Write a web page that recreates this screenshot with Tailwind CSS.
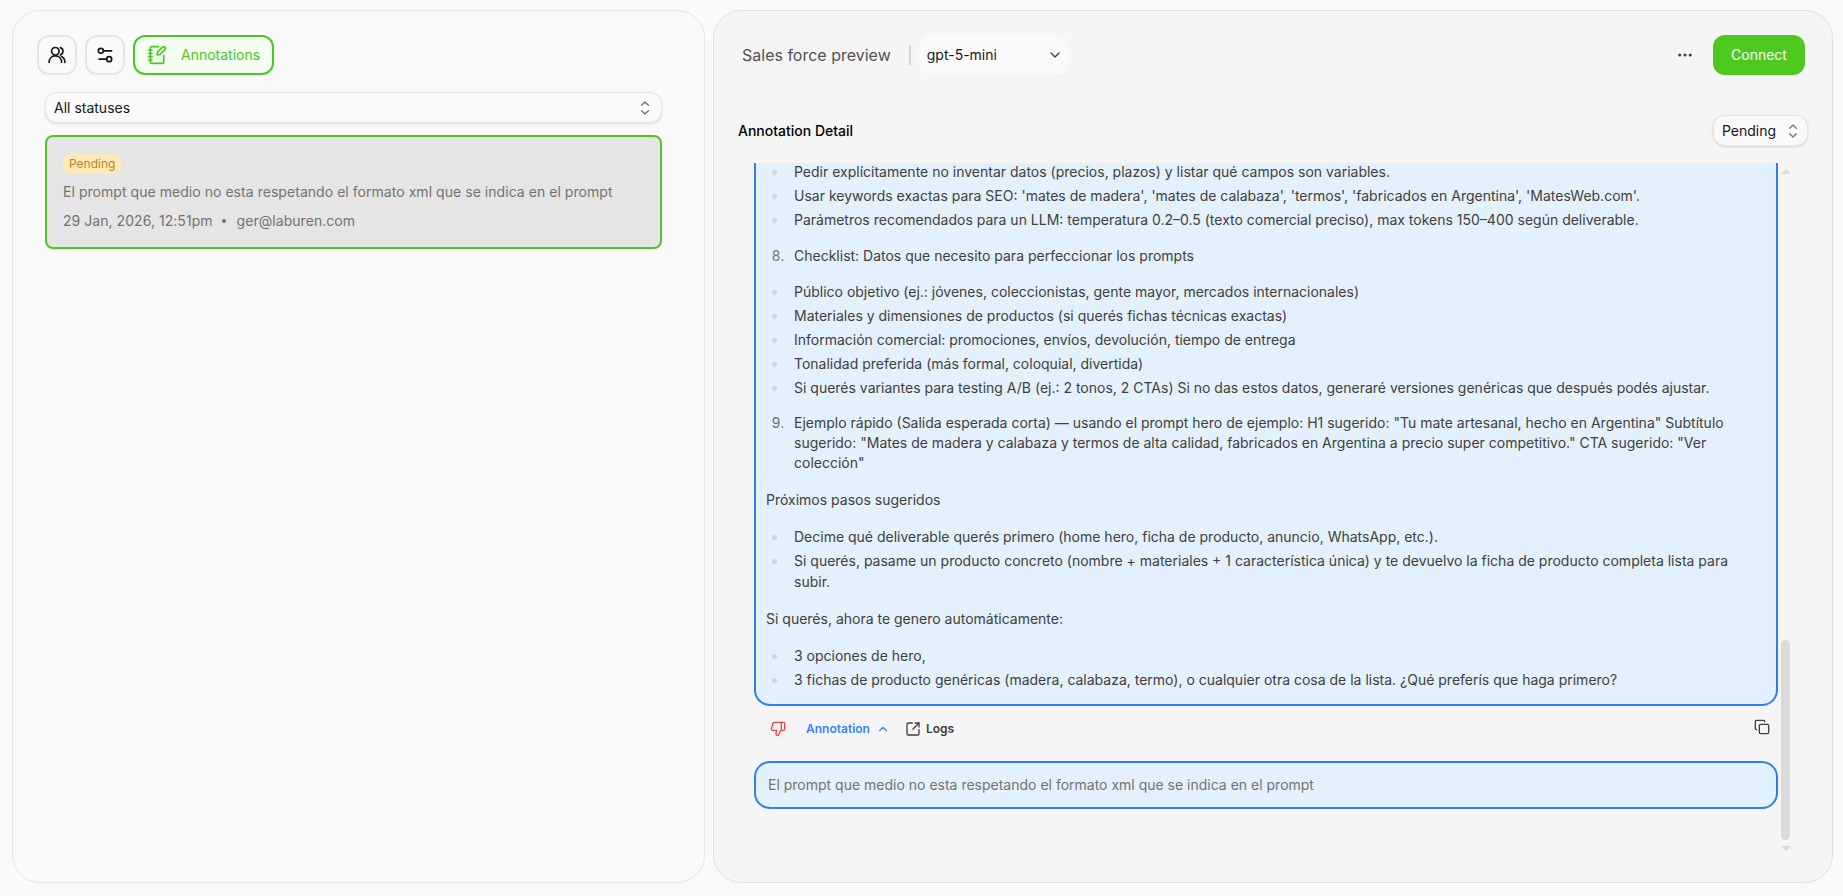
<!DOCTYPE html>
<html lang="en">
<head>
  <meta charset="UTF-8" />
  <title>Annotations</title>
  <script src="https://cdn.jsdelivr.net/npm/@tailwindcss/browser@4"></script>
</head>
<body class="h-screen overflow-hidden bg-[#fafafa] font-['Inter',sans-serif] text-sm text-[#171717] flex gap-2 pl-3 pr-[10px] pt-[10px] pb-[13px]">

  <!-- left panel -->
  <aside class="w-[693px] shrink-0 rounded-[28px] border border-[#e5e5e5] bg-[#fafafa] pl-[24px] pr-[42px] pt-[24px]">
    <div class="flex gap-2">
      <button class="w-10 h-10 flex items-center justify-center rounded-xl border-2 border-[#e5e5e5]">
        <svg class="w-5 h-5" viewBox="0 0 24 24" fill="none" stroke="currentColor" stroke-width="2" stroke-linecap="round" stroke-linejoin="round"><circle cx="10" cy="7.500" r="4.500"/><path d="M2.500 21c0-4.500 3-8 7.500-8s7.500 3.500 7.500 8"/><path d="M16 3.200a4.500 4.500 0 0 1 0 8.600"/><path d="M21.500 21c0-3.500-1.500-6-4-7.300"/></svg>
      </button>
      <button class="w-10 h-10 flex items-center justify-center rounded-xl border-2 border-[#e5e5e5]">
        <svg class="w-5 h-5" viewBox="0 0 24 24" fill="none" stroke="currentColor" stroke-width="2" stroke-linecap="round" stroke-linejoin="round"><path d="M20 7h-9"/><path d="M14 17H5"/><circle cx="17" cy="17" r="3"/><circle cx="7" cy="7" r="3"/></svg>
      </button>
      <button class="h-10 w-[141px] flex items-center gap-[14px] pl-[12px] rounded-xl border-2 border-[#4cc81e] bg-[#f3fdf1] text-[#4cc81e]">
        <svg class="w-5 h-5" viewBox="0 0 24 24" fill="none" stroke="currentColor" stroke-width="2" stroke-linecap="round" stroke-linejoin="round"><path d="M13.400 2H6a2 2 0 0 0-2 2v16a2 2 0 0 0 2 2h12a2 2 0 0 0 2-2v-7.400"/><path d="M2 6h4"/><path d="M2 10h4"/><path d="M2 14h4"/><path d="M2 18h4"/><path d="M21.378 5.626a1 1 0 1 0-3.004-3.004l-5.010 5.012a2 2 0 0 0-.506.854l-.837 2.870a.5.5 0 0 0 .62.62l2.870-.837a2 2 0 0 0 .854-.506z"/></svg>
        Annotations
      </button>
    </div>

    <div class="mt-[17px] ml-2 h-[31px] flex items-center justify-between pl-[8px] pr-[8px] rounded-xl border border-[#e5e5e5] bg-[#fafafa] shadow-sm">
      All statuses
      <svg class="w-4 h-4 text-[#737373]" viewBox="0 0 24 24" fill="none" stroke="currentColor" stroke-width="2" stroke-linecap="round" stroke-linejoin="round"><path d="m7 8 5-5 5 5"/><path d="m7 16 5 5 5-5"/></svg>
    </div>

    <div class="mt-[12px] ml-2 h-[114px] rounded-lg border-2 border-[#4cc81e] bg-[#e5e5e5] px-[16px] pt-[16px] text-[#737373] tracking-[0.045px]">
      <span class="inline-block h-5 rounded-lg bg-[#fdeab8] px-[6px] text-xs leading-5 tracking-normal text-[#b7861c]">Pending</span>
      <p class="mt-[8px] leading-5">El prompt que medio no esta respetando el formato xml que se indica en el prompt</p>
      <p class="mt-[9px] leading-5 flex items-center gap-[9px]">
        <span>29 Jan, 2026, 12:51pm</span>
        <span class="w-1 h-1 rounded-full bg-[#737373]"></span>
        <span class="ml-[2px]">ger@laburen.com</span>
      </p>
    </div>
  </aside>

  <!-- right panel -->
  <main class="flex-1 min-w-0 rounded-[28px] border border-[#e0e0e0] bg-[#f5f5f5] pt-[24px] flex flex-col">
    <header class="flex items-center pl-[28px] pr-[27px] h-10">
      <span class="text-base text-[#525252]">Sales force preview</span>
      <span class="ml-[18px] w-[2px] h-5 bg-[#d4d4d4]"></span>
      <div class="ml-2 w-[150px] h-10 flex items-center justify-between pl-2 pr-[6px] rounded-xl bg-[#fafafa]">
        gpt-5-mini
        <svg class="w-4 h-4 text-[#404040]" viewBox="0 0 24 24" fill="none" stroke="currentColor" stroke-width="2" stroke-linecap="round" stroke-linejoin="round"><path d="m6 9 6 6 6-6"/></svg>
      </div>
      <svg class="ml-auto w-[18px] h-[18px] text-[#404040]" viewBox="0 0 24 24" fill="currentColor"><circle cx="5" cy="12" r="2.100"/><circle cx="12" cy="12" r="2.100"/><circle cx="19" cy="12" r="2.100"/></svg>
      <button class="ml-[19px] w-[92px] h-10 rounded-xl bg-[#4cc81e] text-white">Connect</button>
    </header>

    <div class="mt-10 flex items-center justify-between pl-[24px] pr-[24px] h-[31px]">
      <h2 class="font-medium text-black">Annotation Detail</h2>
      <div class="w-[95px] h-[31px] flex items-center justify-between pl-[8px] pr-[6px] rounded-xl border border-[#e5e5e5] bg-[#fafafa] shadow-sm">
        Pending
        <svg class="w-4 h-4 text-[#737373]" viewBox="0 0 24 24" fill="none" stroke="currentColor" stroke-width="2" stroke-linecap="round" stroke-linejoin="round"><path d="m7 8 5-5 5 5"/><path d="m7 16 5 5 5-5"/></svg>
      </div>
    </div>

    <div class="relative mt-[17px] pl-[40px] pr-[54px] flex-1 min-h-0">
      <!-- message, scrolled so its top is cut off -->
      <div class="overflow-hidden rounded-b-2xl border-x-2 border-b-2 border-[#2f7fee] bg-[#e3f1fd] pl-[10px] pr-[12px] pb-[14px] leading-[21px] text-[#404040]">
        <ul class="-mt-[2px] list-disc pl-[22px] *:pl-[6px] marker:text-[#d1d5db] mb-[15px] flex flex-col gap-[3px]">
          <li>Pedir explícitamente no inventar datos (precios, plazos) y listar qué campos son variables.</li>
          <li>Usar keywords exactas para SEO: 'mates de madera', 'mates de calabaza', 'termos', 'fabricados en Argentina', 'MatesWeb.com'.</li>
          <li>Parámetros recomendados para un LLM: temperatura 0.2–0.5 (texto comercial preciso), max tokens 150–400 según deliverable.</li>
        </ul>
        <ol start="8" class="list-decimal pl-[22px] *:pl-[6px] marker:text-[#6b7280] mb-[15px]"><li>Checklist: Datos que necesito para perfeccionar los prompts</li></ol>
        <ul class="list-disc pl-[22px] *:pl-[6px] marker:text-[#d1d5db] mb-[15px] flex flex-col gap-[3px]">
          <li>Público objetivo (ej.: jóvenes, coleccionistas, gente mayor, mercados internacionales)</li>
          <li>Materiales y dimensiones de productos (si querés fichas técnicas exactas)</li>
          <li>Información comercial: promociones, envíos, devolución, tiempo de entrega</li>
          <li>Tonalidad preferida (más formal, coloquial, divertida)</li>
          <li>Si querés variantes para testing A/B (ej.: 2 tonos, 2 CTAs) Si no das estos datos, generaré versiones genéricas que después podés ajustar.</li>
        </ul>
        <ol start="9" class="list-decimal pl-[22px] *:pl-[6px] marker:text-[#6b7280] mb-[16px] leading-5"><li>Ejemplo rápido (Salida esperada corta) — usando el prompt hero de ejemplo: H1 sugerido: "Tu mate artesanal, hecho en Argentina" Subtítulo sugerido: "Mates de madera y calabaza y termos de alta calidad, fabricados en Argentina a precio super competitivo." CTA sugerido: "Ver colección"</li></ol>
        <p class="mb-[16px]">Próximos pasos sugeridos</p>
        <ul class="list-disc pl-[22px] *:pl-[6px] marker:text-[#d1d5db] mb-[16px] flex flex-col gap-[3px]">
          <li>Decime qué deliverable querés primero (home hero, ficha de producto, anuncio, WhatsApp, etc.).</li>
          <li>Si querés, pasame un producto concreto (nombre + materiales + 1 característica única) y te devuelvo la ficha de producto completa lista para subir.</li>
        </ul>
        <p class="mb-[16px]">Si querés, ahora te genero automáticamente:</p>
        <ul class="list-disc pl-[22px] *:pl-[6px] marker:text-[#d1d5db] flex flex-col gap-[3px]">
          <li>3 opciones de hero,</li>
          <li>3 fichas de producto genéricas (madera, calabaza, termo), o cualquier otra cosa de la lista. ¿Qué preferís que haga primero?</li>
        </ul>
      </div>

      <div class="flex items-center h-[46px] pl-[16px] pr-[8px] text-xs font-semibold">
        <svg class="w-4 h-4 text-[#ef4444]" viewBox="0 0 24 24" fill="none" stroke="currentColor" stroke-width="2" stroke-linecap="round" stroke-linejoin="round"><path d="M17 14V2"/><path d="M9 18.120 10 14H4.170a2 2 0 0 1-1.920-2.560l2.330-8A2 2 0 0 1 6.500 2H20a2 2 0 0 1 2 2v8a2 2 0 0 1-2 2h-2.760a2 2 0 0 0-1.790 1.110L12 22a3.130 3.130 0 0 1-3-3.880Z"/></svg>
        <span class="ml-[20px] text-[#3b82f6]">Annotation</span>
        <svg class="ml-[6px] w-[14px] h-[14px] text-[#3b82f6]" viewBox="0 0 24 24" fill="none" stroke="currentColor" stroke-width="2" stroke-linecap="round" stroke-linejoin="round"><path d="m18 15-6-6-6 6"/></svg>
        <svg class="ml-[15px] w-4 h-4 text-[#404040]" viewBox="0 0 24 24" fill="none" stroke="currentColor" stroke-width="2" stroke-linecap="round" stroke-linejoin="round"><path d="M21 13v6a2 2 0 0 1-2 2H5a2 2 0 0 1-2-2V5a2 2 0 0 1 2-2h6"/><path d="m21 3-9 9"/><path d="M15 3h6v6"/></svg>
        <span class="ml-[5px] text-[#404040]">Logs</span>
        <svg class="ml-auto w-4 h-4 text-[#404040] -translate-y-[2px]" viewBox="0 0 24 24" fill="none" stroke="currentColor" stroke-width="2" stroke-linecap="round" stroke-linejoin="round"><rect width="14" height="14" x="8" y="8" rx="2" ry="2"/><path d="M4 16c-1.100 0-2-.9-2-2V4c0-1.100.9-2 2-2h10c1.100 0 2 .9 2 2"/></svg>
      </div>

      <div class="mt-[9px] h-12 flex items-center rounded-2xl border-2 border-[#2f7fee] bg-[#e3f1fd] pl-[12px] text-[#737373]">El prompt que medio no esta respetando el formato xml que se indica en el prompt</div>

      <!-- scrollbar -->
      <div class="absolute right-[42px] top-0 w-[9px] h-[690px] flex flex-col items-center justify-between">
        <span class="mt-[6px] w-0 h-0 border-x-[5px] border-x-transparent border-b-[5px] border-b-[#dadada]"></span>
        <span class="absolute top-[477px] w-[9px] h-[200px] rounded-full bg-[#dadada]"></span>
        <span class="mb-[2px] w-0 h-0 border-x-[5px] border-x-transparent border-t-[5px] border-t-[#dadada]"></span>
      </div>
    </div>
  </main>
</body>
</html>
